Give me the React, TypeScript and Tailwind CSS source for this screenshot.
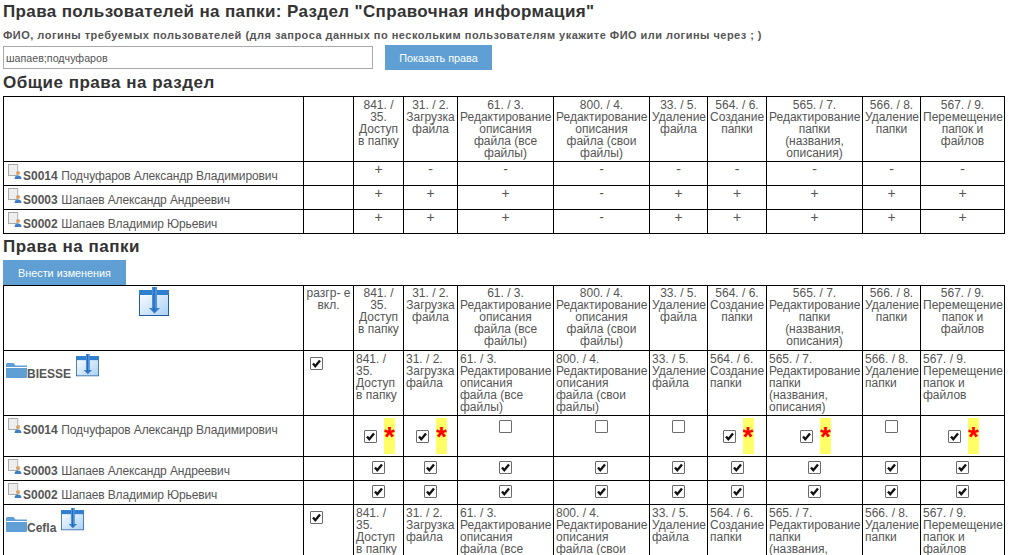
import React from "react";

const headers = [
  "841. / 35. Доступ в папку",
  "31. / 2. Загрузка файла",
  "61. / 3. Редактирование описания файла (все файлы)",
  "800. / 4. Редактирование описания файла (свои файлы)",
  "33. / 5. Удаление файла",
  "564. / 6. Создание папки",
  "565. / 7. Редактирование папки (названия, описания)",
  "566. / 8. Удаление папки",
  "567. / 9. Перемещение папок и файлов",
];

const generalRows = [
  { code: "S0014", name: "Подчуфаров Александр Владимирович", marks: "+--------" },
  { code: "S0003", name: "Шапаев Александр Андреевич", marks: "+++-+++++" },
  { code: "S0002", name: "Шапаев Владимир Юрьевич", marks: "+++-+++++" },
];

const Colgroup = () => (
  <colgroup>
    <col className="w-[300px]" />
    <col className="w-[50px]" />
    <col className="w-[50px]" />
    <col className="w-[54px]" />
    <col className="w-[96px]" />
    <col className="w-[96px]" />
    <col className="w-[58px]" />
    <col className="w-[59px]" />
    <col className="w-[96px]" />
    <col className="w-[58px]" />
    <col className="w-[84px]" />
  </colgroup>
);

const Cell = ({ children, className = "" }: { children?: React.ReactNode; className?: string }) => (
  <td className={`border border-black p-0 align-top ${className}`}>{children}</td>
);

const CheckBox = ({ checked = true }: { checked?: boolean }) => (
  <span className="relative inline-block h-[13px] w-[13px] align-middle">
    <input
      type="checkbox"
      defaultChecked={checked}
      className="block h-[13px] w-[13px] appearance-none rounded-[1px] border border-[#6b6b6b] bg-white"
    />
    {checked && (
      <svg viewBox="0 0 13 13" className="pointer-events-none absolute left-0 top-0 h-[13px] w-[13px]">
        <path d="M3 6.5 L5.3 9.2 L10 3.5" fill="none" stroke="#111" strokeWidth="2.4" />
      </svg>
    )}
  </span>
);

const UserIcon = () => (
  <svg viewBox="0 0 15 16" className="inline-block h-4 w-[15px] align-baseline">
    <rect x="0.5" y="0.5" width="9" height="11" fill="#eee" stroke="#aaa" />
    <path d="M10 1v10" stroke="#ddd" />
    <circle cx="10" cy="9" r="2" fill="#d9a066" />
    <path d="M6.5 15c0-2.5 1.500-3.500 3.500-3.500s3.500 1 3.500 3.500z" fill="#3f7fc8" />
  </svg>
);

const FolderIcon = () => (
  <svg viewBox="0 0 21 16" className="inline-block h-4 w-[21px] align-baseline">
    <path d="M0 2.500q0-1.500 1.500-1.500h6l2 2.500h11.500v1.500h-21z" fill="#5f9fd6" />
    <path d="M0 6h21v9q0 1-1 1h-19q-1 0-1-1z" fill="#5f9fd6" />
  </svg>
);

const BoxArrowIcon = ({ className = "" }: { className?: string }) => (
  <svg viewBox="0 0 30 30" className={`inline-block ${className}`}>
    <defs>
      <linearGradient id="boxFill" x1="0" y1="0" x2="1" y2="1">
        <stop offset="0" stopColor="#ffffff" />
        <stop offset="1" stopColor="#a9d0f5" />
      </linearGradient>
    </defs>
    <rect x="0.500" y="3.500" width="29" height="25" fill="url(#boxFill)" stroke="#1f5f9f" />
    <rect x="0" y="3" width="30" height="5" fill="#2f7ed0" />
    <rect x="13" y="0" width="5" height="22" fill="#4a90dc" />
    <path d="M10 21h11l-5.500 5.500z" fill="#2f7ed0" />
    <path d="M15 0v24" stroke="#1f5f9f" />
  </svg>
);

const HeaderLabel = ({ text, top = "pt-[2px]" }: { text: string; top?: string }) => (
  <div className={`px-[2px] ${top}`}>{text}</div>
);

const UserName = ({ code, name }: { code: string; name: string }) => (
  <span className="whitespace-nowrap pl-[4px] text-[13px]">
    <UserIcon />
    <b className="text-[12px] font-bold">{code}</b>{" "}
    <span className="text-[12px] tracking-[-0.12px]">{name}</span>
  </span>
);

const Button = ({ children, className = "" }: { children: React.ReactNode; className?: string }) => (
  <button type="button" className={`h-[25px] bg-[#5f9fd3] text-center text-[10.8px] text-white ${className}`}>
    {children}
  </button>
);

const Star = () => (
  <span className="ml-[7px] inline-block h-[36px] w-[11px] overflow-hidden bg-[#ffff66] text-center align-middle text-[28px] font-bold leading-[38px] text-[#ff0000]">
    *
  </span>
);

const starred = [true, true, false, false, false, true, true, false, true];
const unchecked = [false, false, true, true, true, false, false, true, false];

const FolderRow = ({ title, iconMargin }: { title: string; iconMargin: string }) => (
  <tr className="h-[65px]">
    <Cell className="text-left">
      <div className="pl-[2px] pt-[3px] text-[12px]">
        <FolderIcon />
        <b>{title}</b>
        <BoxArrowIcon className={`h-[23px] w-[23px] align-[1px] ${iconMargin}`} />
      </div>
    </Cell>
    <Cell className="pl-[6px] pt-[6px] text-left">
      <CheckBox />
    </Cell>
    {headers.map((h) => (
      <Cell key={h} className="text-left">
        <HeaderLabel text={h} />
      </Cell>
    ))}
  </tr>
);

export default function App() {
  return (
    <div className="h-[555px] w-[1021px] overflow-hidden bg-white pl-[3px] font-['Liberation_Sans',Arial,sans-serif] text-[12px] leading-[12px] text-[#555]">
      <h1 className="pt-[2px] text-[17px] font-bold leading-[20px] tracking-[0.37px] text-[#333]">
        Права пользователей на папки: Раздел "Справочная информация"
      </h1>
      <p className="mt-[7px] text-[11px] font-bold leading-[13px] tracking-[0.48px] text-[#555]">
        ФИО, логины требуемых пользователей (для запроса данных по нескольким пользователям укажите ФИО или логины через ; )
      </p>
      <div className="mt-[3px] flex items-center gap-[12px]">
        <input
          defaultValue="шапаев;подчуфаров"
          className="h-[23px] w-[370px] border border-[#aaa] bg-white px-[2px] text-[10.7px] text-[#555] outline-none"
        />
        <Button className="w-[107px]">Показать права</Button>
      </div>
      <h2 className="mt-[3px] text-[17px] font-bold leading-[20px] tracking-[0.5px] text-[#333]">Общие права на раздел</h2>
      <table className="mt-[3px] w-[1001px] table-fixed border-collapse text-center">
        <Colgroup />
        <tbody>
          <tr className="h-[65px]">
            <Cell />
            <Cell />
            {headers.map((h) => (
              <Cell key={h}>
                <HeaderLabel text={h} />
              </Cell>
            ))}
          </tr>
          {generalRows.map((row) => (
            <tr key={row.code} className="h-[24px]">
              <Cell className="pt-[2px] text-left">
                <UserName code={row.code} name={row.name} />
              </Cell>
              <Cell />
              {row.marks.split("").map((m, i) => (
                <Cell key={i} className="pt-[1px] text-[14px]">
                  {m}
                </Cell>
              ))}
            </tr>
          ))}
        </tbody>
      </table>
      <h2 className="mt-[3px] text-[17px] font-bold leading-[20px] tracking-[0.5px] text-[#333]">Права на папки</h2>
      <Button className="mt-[3px] block w-[123px]">Внести изменения</Button>
      <table className="w-[1001px] table-fixed border-collapse text-center">
        <Colgroup />
        <tbody>
          <tr className="h-[65px]">
            <Cell>
              <BoxArrowIcon className="mt-[1px] h-[30px] w-[30px]" />
            </Cell>
            <Cell>
              <div className="pt-[1px]">разгр- е вкл.</div>
            </Cell>
            {headers.map((h) => (
              <Cell key={h}>
                <HeaderLabel text={h} top="pt-[1px]" />
              </Cell>
            ))}
          </tr>
          <FolderRow title="BIESSE" iconMargin="ml-[5px]" />
          <tr className="h-[41px]">
            <Cell className="pt-[2px] text-left">
              <UserName code={generalRows[0].code} name={generalRows[0].name} />
            </Cell>
            <Cell />
            {starred.map((s, i) => (
              <Cell key={i} className={s ? "pl-[2px] pt-[2px]" : "pt-[4px]"}>
                <CheckBox checked={!unchecked[i]} />
                {s && <Star />}
              </Cell>
            ))}
          </tr>
          {generalRows.slice(1).map((row) => (
            <tr key={row.code} className="h-[24px]">
              <Cell className="pt-[2px] text-left">
                <UserName code={row.code} name={row.name} />
              </Cell>
              <Cell />
              {headers.map((h) => (
                <Cell key={h} className="pt-[4px]">
                  <CheckBox />
                </Cell>
              ))}
            </tr>
          ))}
          <FolderRow title="Cefla" iconMargin="ml-[5px]" />
        </tbody>
      </table>
    </div>
  );
}
